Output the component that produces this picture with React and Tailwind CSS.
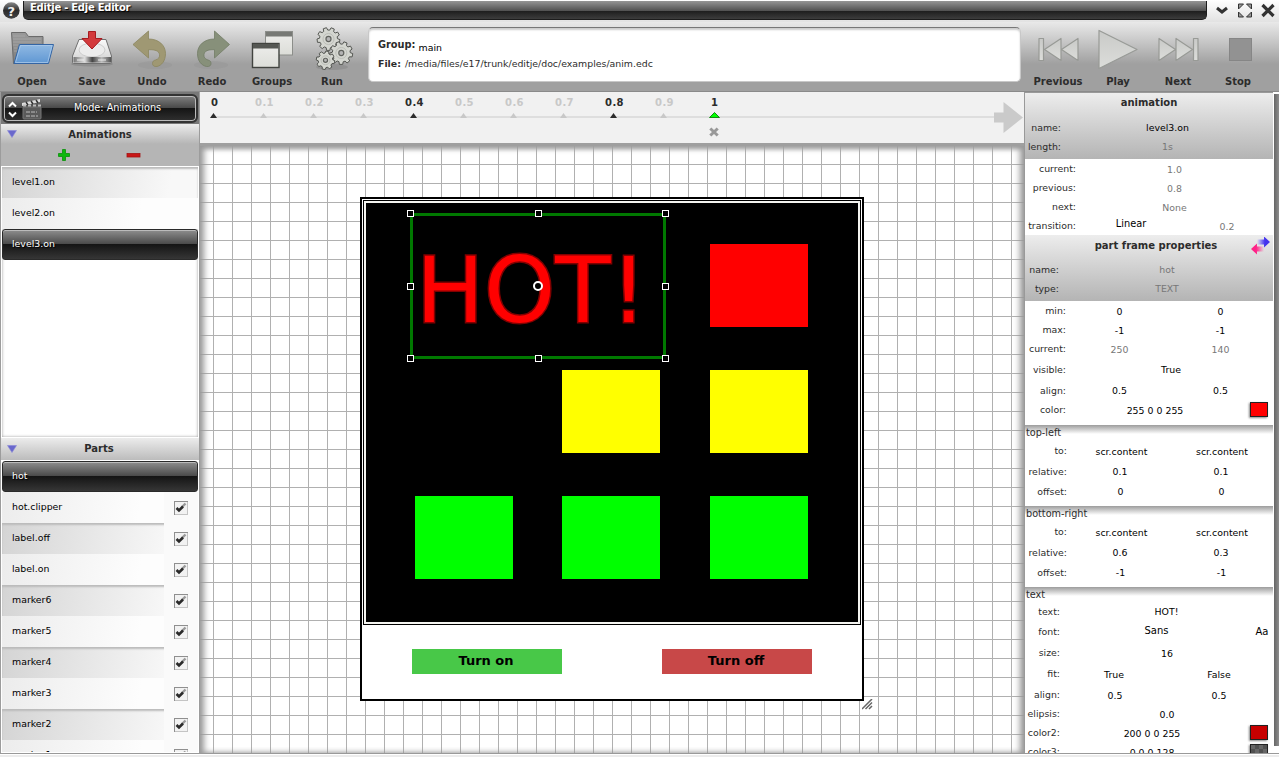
import React from "react";

const gear = (cx, cy, r, teeth) => {
  const pts = [];
  for (let i = 0; i < teeth; i++) {
    const a = (i * 2 * Math.PI) / teeth + 0.2;
    const s = Math.PI / teeth;
    [[-0.68, 0.78], [-0.42, 1], [0.42, 1], [0.68, 0.78]].forEach(([o, k]) => {
      pts.push(`${(cx + Math.cos(a + o * s) * r * k).toFixed(2)},${(cy + Math.sin(a + o * s) * r * k).toFixed(2)}`);
    });
  }
  return pts.join(" ");
};

const OpenIcon = () => (
  <svg width="60" height="50" viewBox="2 24 60 50">
    <defs>
      <linearGradient id="blue" x1="0" y1="0" x2="0" y2="1"><stop offset="0" stopColor="#90b9e3" /><stop offset="1" stopColor="#5f97d3" /></linearGradient>
      <linearGradient id="fold" x1="0" y1="0" x2="0" y2="1"><stop offset="0" stopColor="#9a9a9a" /><stop offset="1" stopColor="#7e7e7e" /></linearGradient>
    </defs>
    <path d="M11.5 32.5h14l3 4h14.500v8l-4 19H13.500z" fill="url(#fold)" stroke="#6b6b6b" />
    <path d="M13 36h12M13 39h28M13 42h28M13 45h5M14 48h3M14 51h3" stroke="#a9a9a9" strokeWidth="0.8" />
    <path d="M19.500 44.500h34l-5 19H14z" fill="url(#blue)" stroke="#3465a4" />
    <path d="M20.500 45.500h31.500l-4.300 17H15.500z" fill="none" stroke="#a9c9ea" strokeWidth="0.8" />
  </svg>
);

const SaveIcon = () => (
  <svg width="60" height="50" viewBox="62 24 60 50">
    <defs>
      <linearGradient id="disk" x1="0" y1="0" x2="0" y2="1"><stop offset="0" stopColor="#fafafa" /><stop offset="1" stopColor="#cfcfcf" /></linearGradient>
      <linearGradient id="front" x1="0" y1="0" x2="1" y2="0"><stop offset="0" stopColor="#777" /><stop offset=".3" stopColor="#ddd" /><stop offset=".5" stopColor="#444" /><stop offset=".75" stopColor="#bbb" /><stop offset="1" stopColor="#555" /></linearGradient>
    </defs>
    <ellipse cx="92" cy="64" rx="21" ry="2.500" fill="#777" opacity=".45" />
    <path d="M79 39.500h27l5.500 16.500v6.500q0 1-1 1h-37q-1 0-1-1V56z" fill="url(#disk)" stroke="#707070" />
    <ellipse cx="92" cy="50" rx="13" ry="7" fill="#ececec" stroke="#c4c4c4" strokeWidth="0.8" />
    <rect x="73.500" y="57" width="37.500" height="5.500" fill="url(#front)" />
    <path d="M77 60h7M98 60h8" stroke="#eee" strokeWidth="1" />
    <path d="M88.500 31.500h7v7h6.500l-10 10.500-10-10.500h6.500z" fill="#d33a3c" stroke="#a61b20" />
  </svg>
);

const UndoIcon = () => (
  <svg width="60" height="50" viewBox="122 24 60 50">
    <ellipse cx="155" cy="65" rx="17" ry="4" fill="#888" opacity=".2" />
    <path d="M133 44.500L148.500 31v8c10 0 17 6 17 14.500 0 7.500-4 12-8.500 13-3 .4-4.500-1-4.500-3 0-2 1-3 3-3.500 3-.8 4.500-3 4-5.500-.6-3.500-4-5-11-4.800V58z" fill="#9f9873" stroke="#8b865f" strokeWidth="0.800" />
  </svg>
);

const RedoIcon = () => (
  <svg width="60" height="50" viewBox="182 24 60 50">
    <ellipse cx="211" cy="65" rx="17" ry="4" fill="#888" opacity=".2" />
    <path d="M229.500 44.500L214.500 31v8c-10 0-17 6-17 14.500 0 7.500 4 12 9 13 3 .4 4.500-1 4.500-3 0-2-1-3-3-3.500-3-.8-4.500-3-4-5.500.6-3.500 3.500-5 10.500-4.800V58z" fill="#87907a" stroke="#727c66" strokeWidth="0.800" />
  </svg>
);

const GroupsIcon = () => (
  <svg width="60" height="50" viewBox="242 24 60 50">
    <defs><linearGradient id="win" x1="0" y1="0" x2="0" y2="1"><stop offset="0" stopColor="#eeeeec" /><stop offset="1" stopColor="#dcddd8" /></linearGradient></defs>
    <rect x="265.500" y="31.500" width="27" height="23.500" fill="url(#win)" stroke="#8c8e8a" />
    <rect x="266" y="32" width="26" height="4.500" fill="#777975" />
    <rect x="252.500" y="43.500" width="26.500" height="24" fill="url(#win)" stroke="#41433f" strokeWidth="1.400" />
    <rect x="253" y="44" width="25.500" height="4.500" fill="#555753" />
  </svg>
);

const RunIcon = () => (
  <svg width="60" height="50" viewBox="302 24 60 50">
    <ellipse cx="332" cy="67" rx="16" ry="3" fill="#777" opacity=".35" />
    {[[328.500, 39, 11.500, 9], [341.300, 53, 11.500, 9], [325.500, 60.300, 9.300, 8]].map(([x, y, r, n]) => (
      <g key={x}>
        <polygon points={gear(x, y, r, n)} fill="#d4d6d0" stroke="#555753" strokeWidth="1" strokeLinejoin="round" />
        <circle cx={x} cy={y} r={r * 0.48} fill="none" stroke="#bcbeb8" strokeWidth="1" />
        <circle cx={x} cy={y} r={r * 0.22} fill="#b4b4b4" stroke="#60625e" strokeWidth="1.200" />
      </g>
    ))}
  </svg>
);

const MediaDefs = () => (
  <defs><linearGradient id="media" x1="0" y1="0" x2="0" y2="1"><stop offset="0" stopColor="#c9cac8" /><stop offset="1" stopColor="#dcddda" /></linearGradient></defs>
);

const PrevIcon = () => (
  <svg width="60" height="50" viewBox="1028 24 60 50">
    <MediaDefs />
    <g fill="url(#media)" stroke="#989a96" strokeWidth="1.200" strokeLinejoin="round">
      <path d="M1039 38.500h4.500v22h-4.500z" /><path d="M1061 38.500v22L1044.500 49.500zM1078 38.500v22L1061.500 49.500z" />
    </g>
  </svg>
);
const PlayIcon = () => (
  <svg width="60" height="50" viewBox="1088 24 60 50">
    <path d="M1099 30.500v38l38-19z" fill="url(#media)" stroke="#989a96" strokeWidth="1.200" strokeLinejoin="round" />
  </svg>
);
const NextIcon = () => (
  <svg width="60" height="50" viewBox="1148 24 60 50">
    <g fill="url(#media)" stroke="#989a96" strokeWidth="1.200" strokeLinejoin="round">
      <path d="M1193.500 38.500h4.500v22h-4.500z" /><path d="M1159 38.500v22L1175.500 49.500zM1176 38.500v22L1192.500 49.500z" />
    </g>
  </svg>
);
const StopIcon = () => (
  <svg width="60" height="50" viewBox="1208 24 60 50">
    <rect x="1229.500" y="38.500" width="22" height="22" fill="#929292" stroke="#868686" />
  </svg>
);

const Tool = ({ icon, label }) => (
  <div className="flex w-[60px] flex-col items-center">
    {icon}
    <span className="text-[10px] leading-[15px] font-bold text-[#2c2c2c]">{label}</span>
  </div>
);

const TitleBar = () => (
  <div className="flex h-[22px] bg-gradient-to-b from-white to-[#e2e2e2]">
    <svg width="23" height="22" viewBox="0 0 23 22">
      <defs><linearGradient id="orb" x1="0" y1="0" x2="0" y2="1"><stop offset="0" stopColor="#8a8a8a" /><stop offset=".5" stopColor="#2c2c2c" /><stop offset="1" stopColor="#454545" /></linearGradient></defs>
      <circle cx="11.300" cy="10.500" r="8.300" fill="url(#orb)" />
      <text x="11.300" y="15.500" textAnchor="middle" fontFamily="DejaVu Sans" fontWeight="bold" fontSize="13" fill="#eee">?</text>
    </svg>
    <div className="mt-px h-[19px] w-[1184px] rounded-b-[5px] border-x border-b border-[#1c1c1c] bg-[linear-gradient(#959595_0,#505050_10px,#1e1e1e_10px,#404040_19px)] pl-[6px] text-[10px] leading-[13px] font-bold tracking-[-0.25px] text-white [text-shadow:1px_1px_1px_#000]">
      Editje - Edje Editor
    </div>
    <svg width="72" height="22" viewBox="1207 0 72 22">
      <g stroke="#333" fill="none">
        <path d="M1217 8l5 4 5-4" strokeWidth="3" />
        <path d="M1262.500 5l11 11M1273.500 5l-11 11" strokeWidth="3.200" />
      </g>
      <path d="M1238.500 4h5l-5 5zM1251.500 4h-5l5 5zM1238.500 17h5l-5-5zM1251.500 17h-5l5-5z" fill="#999" stroke="#333" />
    </svg>
  </div>
);

const Toolbar = () => (
  <div className="flex h-[70px] border-b border-[#8a8a8a] bg-[linear-gradient(#e9e9e9_0,#a0a0a0_42px,#a0a0a0_100%)] pt-[2px]">
    <div className="flex w-[366px] pl-[2px]">
      <Tool icon={<OpenIcon />} label="Open" />
      <Tool icon={<SaveIcon />} label="Save" />
      <Tool icon={<UndoIcon />} label="Undo" />
      <Tool icon={<RedoIcon />} label="Redo" />
      <Tool icon={<GroupsIcon />} label="Groups" />
      <Tool icon={<RunIcon />} label="Run" />
    </div>
    <div className="mt-[3px] ml-[2px] flex h-[55px] w-[653px] flex-col rounded-[5px] border border-[#c8c8c8] border-t-[#777] bg-white pt-[9px] pl-[9px] text-[9.4px] shadow-[inset_0_2px_2px_#ccc]">
      <div className="flex h-[19px] gap-[3px] leading-[16px]">
        <b className="text-[9.8px] text-[#2c2c2c]">Group:</b>
        <span className="pt-[3px] text-black">main</span>
      </div>
      <div className="flex gap-[4px] leading-[16px] text-[#2c2c2c]">
        <b>File:</b>
        <span>/media/files/e17/trunk/editje/doc/examples/anim.edc</span>
      </div>
    </div>
    <div className="ml-[7px] flex">
      <Tool icon={<PrevIcon />} label="Previous" />
      <Tool icon={<PlayIcon />} label="Play" />
      <Tool icon={<NextIcon />} label="Next" />
      <Tool icon={<StopIcon />} label="Stop" />
    </div>
  </div>
);

const Collapse = () => (
  <svg className="ml-[6px] shrink-0" width="10" height="8" viewBox="0 0 10 8"><path d="M.5 .5h9L5 7.500z" fill="#6a68cc" stroke="#8a88da" strokeWidth=".6" /></svg>
);

const Check = () => (
  <svg width="14" height="14" viewBox="0 0 14 14">
    <rect x=".5" y=".5" width="13" height="13" fill="#f2f2f2" stroke="#c4c4c4" />
    <path d="M0 .5h14M.5 0v14" stroke="#8f8f8f" />
    <path d="M8 6l3.500-3.500" stroke="#999" strokeWidth="2.400" />
    <path d="M2.500 7L5 9.500l4-4" stroke="#2a2a2a" strokeWidth="2.600" fill="none" />
  </svg>
);

const selectedRow = "h-[31px] shrink-0 rounded-[3px] border border-[#2a2a2a] bg-[linear-gradient(#8e8e8e_0,#4a4a4a_14px,#141414_14px,#383838_30px)] pl-[9px] text-[9.4px] leading-[27px] text-white shadow-[inset_0_1px_0_#bbb] [text-shadow:1px_1px_1px_#000]";
const lightRow = "flex h-[31px] shrink-0 bg-[linear-gradient(100deg,#ececec_0,#fdfdfd_70%)] pl-[10px] text-[9.4px] leading-[29px] text-black";
const darkRow = "flex h-[31px] shrink-0 bg-[linear-gradient(100deg,#d4d4d4_0,#f8f8f8_85%)] pl-[10px] text-[9.4px] leading-[29px] text-black shadow-[inset_0_2px_2px_#bbb]";

const PartRow = ({ name, dark }) => (
  <div className={dark ? darkRow : lightRow}>
    <span className="w-[152px]">{name}</span>
    <div className="flex h-[31px] w-[34px] bg-[#fafafa] pt-[9px] pl-[10px]"><Check /></div>
  </div>
);

const LeftPanel = () => (
  <div className="flex w-[200px] flex-col border-r border-l border-[#9c9c9c]">
    <div className="h-[32px] bg-[#787878] px-px pt-[2px]">
      <div className="flex h-[29px] items-center rounded-[6px] border-2 border-[#333] bg-[linear-gradient(#808080_0,#484848_12px,#141414_12px,#303030_25px)] shadow-[inset_0_0_0_1px_#bbb]">
        <svg width="38" height="22" viewBox="4 97 38 22">
          <path d="M9 105.500l3.500-3.500 3.500 3.500M9 111.500l3.500 3.500 3.500-3.500" fill="none" stroke="#fff" strokeWidth="2" />
          <rect x="23" y="106" width="18" height="12" rx="1" fill="#5a5a5a" stroke="#777" />
          <path d="M22 102l18-4v3l-18 4z" fill="#ddd" /><path d="M23 104.500h18" stroke="#bbb" strokeWidth="2" strokeDasharray="3 2" />
          <path d="M26 101l2 3M31 100l2 3M36 99l2 3" stroke="#333" strokeWidth="1.500" />
          <path d="M26 111h4M31 111h6M26 115h12" stroke="#bbb" strokeDasharray="4 1" />
        </svg>
        <span className="grow pr-[3px] text-center text-[9.7px] text-white [text-shadow:0_0_2px_#000]">Mode: Animations</span>
      </div>
    </div>
    <div className="h-[42px] bg-[linear-gradient(#ececec_0,#b5b5b5_20px)]">
      <div className="flex h-[20px] items-center">
        <Collapse />
        <span className="grow pr-[16px] text-center text-[10px] leading-[15px] font-bold text-[#2c2c2c]">Animations</span>
      </div>
      <div className="flex h-[22px] items-start gap-[54px] pt-[4px] pl-[55px]">
        <svg width="16" height="15" viewBox="0 0 16 15"><path d="M6.500 1.500h3v4h4v3h-4v4h-3v-4h-4v-3h4z" fill="#0cb80c" stroke="#079007" strokeWidth=".8" /></svg>
        <svg width="16" height="15" viewBox="0 0 16 15"><rect x="1" y="5.500" width="13" height="3.500" fill="#c81616" stroke="#a51212" strokeWidth=".8" /></svg>
      </div>
    </div>
    <div className="flex h-[272px] shrink-0 flex-col border border-white bg-white shadow-[inset_0_0_3px_#999]">
      <div className={darkRow}>level1.on</div>
      <div className={lightRow}>level2.on</div>
      <div className={selectedRow}>level3.on</div>
    </div>
    <div className="flex h-[22px] shrink-0 items-center bg-gradient-to-b from-[#ececec] to-[#bcbcbc]">
      <Collapse />
      <span className="grow pr-[18px] pb-px text-center text-[10px] font-bold text-[#2c2c2c]">Parts</span>
    </div>
    <div className="flex h-[293px] shrink-0 flex-col overflow-hidden border border-white bg-white">
      <div className={selectedRow}>hot</div>
      <PartRow name="hot.clipper" />
      <PartRow name="label.off" dark />
      <PartRow name="label.on" />
      <PartRow name="marker6" dark />
      <PartRow name="marker5" />
      <PartRow name="marker4" dark />
      <PartRow name="marker3" />
      <PartRow name="marker2" dark />
      <PartRow name="marker1" />
    </div>
  </div>
);

const ticks = ["0", "0.1", "0.2", "0.3", "0.4", "0.5", "0.6", "0.7", "0.8", "0.9", "1"];
const keyframes = ["0", "0.4", "0.8"];

const Timeline = () => (
  <div className="flex h-[54px] border-b-[3px] border-[#9f9f9f] bg-[#f1f1f1]">
    <div className="flex w-[794px] pt-[3px]">
      {ticks.map((t, i) => {
        const key = keyframes.includes(t);
        const last = t === "1";
        return (
          <div key={t} className={i === 0 ? "flex w-[39px] shrink-0 flex-col" : last ? "flex w-[305px] shrink-0 flex-col" : "flex w-[50px] shrink-0 flex-col"}>
            <span className={(i === 0 ? "pl-[11px]" : last ? "pl-[22px]" : "w-[50px] pl-[1px] text-center") + " text-[10px] leading-[16px] font-bold tracking-[0.4px] " + (key || last ? "text-[#2c2c2c]" : "text-[#c8c8c8]")}>{t}</span>
            <svg className="shrink-0" width={i === 0 ? 39 : last ? 305 : 50} height="30" viewBox={i === 0 ? "-14 0 39 30" : last ? "-25.5 0 305 30" : "-25 0 50 30"}>
              <rect x={i === 0 ? 0 : -26} y="5" width={last ? 310 : 52} height="2" fill="#dedede" />
              {last ? (
                <>
                  <path d="M-5 6.500L0 1.500L5 6.500z" fill="#0f0" stroke="#128a12" />
                  <path d="M-4.200 17.500L3.200 24.500M3.200 17.500L-4.200 24.500" stroke="#999" strokeWidth="3" />
                </>
              ) : (
                <path d="M-4 7L-.5 2L3 7z" fill={key ? "#2c2c2c" : "#c8c8c8"} />
              )}
            </svg>
          </div>
        );
      })}
    </div>
    <svg width="30" height="51" viewBox="994 92 30 51"><path d="M994 112.500h9.500V102L1023 117.500L1003.500 133V122.500H994z" fill="#cacaca" /></svg>
  </div>
);

const handle = "absolute h-[7px] w-[7px] border border-white bg-black";

const Canvas = () => (
  <div className="relative h-[608px] overflow-hidden bg-white bg-[linear-gradient(#b0b0b0_1px,transparent_1px),linear-gradient(90deg,#b0b0b0_1px,transparent_1px)] bg-[size:19px_19px] bg-[position:13px_18px]">
    <div className="absolute inset-0 border-b border-[#999] shadow-[inset_5px_0_6px_-1px_#999,inset_-5px_0_6px_-1px_#999,inset_0_4px_5px_-1px_#aaa]" />
    <div className="absolute top-[51px] left-[160px] h-[504px] w-[504px] border-2 border-black bg-white">
      <div className="mt-px ml-px h-[425px] w-[498px] border border-black bg-[#f4f4f0] p-[2px]"><div className="h-full w-full bg-black" /></div>
      <div className="flex justify-between px-[50px] pt-[24px] text-[13px] leading-[23px] font-bold text-black">
        <div className="h-[25px] w-[150px] bg-[#48c848] pr-[2px] text-center">Turn on</div>
        <div className="h-[25px] w-[150px] bg-[#c84848] pr-[2px] text-center">Turn off</div>
      </div>
    </div>
    <div className="absolute top-[98px] left-[510px] h-[83px] w-[98px] bg-[#f00]" />
    <div className="absolute top-[224px] left-[362px] h-[83px] w-[98px] bg-[#ff0]" />
    <div className="absolute top-[224px] left-[510px] h-[83px] w-[98px] bg-[#ff0]" />
    <div className="absolute top-[350px] left-[215px] h-[83px] w-[98px] bg-[#0f0]" />
    <div className="absolute top-[350px] left-[362px] h-[83px] w-[98px] bg-[#0f0]" />
    <div className="absolute top-[350px] left-[510px] h-[83px] w-[98px] bg-[#0f0]" />
    <div className="absolute top-[67px] left-[210px] h-[146px] w-[256px] border-[3px] border-[#007800]" />
    <div className="absolute top-[91px] left-[216px] text-[90.500px] leading-[107px] text-[#f00] [-webkit-text-stroke:3px_#800000] [paint-order:stroke_fill]">HOT!</div>
    <div className={handle + " top-[64px] left-[207px]"} />
    <div className={handle + " top-[64px] left-[335px]"} />
    <div className={handle + " top-[64px] left-[462px]"} />
    <div className={handle + " top-[137px] left-[207px]"} />
    <div className={handle + " top-[137px] left-[462px]"} />
    <div className={handle + " top-[209px] left-[207px]"} />
    <div className={handle + " top-[209px] left-[335px]"} />
    <div className={handle + " top-[209px] left-[462px]"} />
    <div className="absolute top-[135px] left-[333px] h-[10px] w-[10px] rounded-full border-2 border-white bg-black" />
    <svg className="absolute top-[553px] left-[662px]" width="11" height="11" viewBox="0 0 11 11"><path d="M0 10L10 0M3.500 10L10 3.500M7 10L10 7" stroke="#666" strokeWidth="1.500" /></svg>
  </div>
);

const Swatch = ({ color }) => <div className={"h-[15px] w-[18px] shrink-0 border border-[#222] shadow-[-1px_1px_2px_#888] " + color} />;

const Row = ({ h = "h-[19px]", label, lw, cells, dim, swatch }) => (
  <div className={"flex shrink-0 items-center " + h}>
    <span className={"shrink-0 pt-px text-right whitespace-nowrap text-[#2c2c2c] " + lw}>{label}</span>
    {cells.map(([w, text], i) => (
      <span key={i} className={"shrink-0 pt-[2px] text-center whitespace-nowrap " + w + (dim ? " text-[#777]" : " text-black")}>{text}</span>
    ))}
    {swatch && <Swatch color={swatch} />}
  </div>
);

const Head = ({ title, icon, children }) => (
  <div className="flex h-[66px] shrink-0 flex-col bg-gradient-to-b from-[#ededed] to-[#b4b4b4]">
    <div className="flex h-[24px] items-start pt-[3px]">
      <span className={"text-center text-[10px] font-bold leading-[15px] text-[#2c2c2c] " + (icon ? "w-[225px] pl-[37px]" : "mt-[-1px] w-[248px]")}>{title}</span>
      {icon}
    </div>
    {children}
  </div>
);

const Section = ({ title, children, h }) => (
  <div className={"flex shrink-0 flex-col bg-[linear-gradient(#9c9c9c_0,#fff_9px)] " + h}>
    <div className="h-[16px] shrink-0 pl-px text-[9.7px] leading-[16px] text-[#2c2c2c]">{title}</div>
    {children}
  </div>
);

const SwapIcon = () => (
  <svg className="mt-[-1px] ml-[1px]" width="20" height="18" viewBox="1251 237 20 18">
    <defs>
      <linearGradient id="sb" x1="0" x2="1"><stop offset="0" stopColor="#43f" stopOpacity="0" /><stop offset=".6" stopColor="#43e" /></linearGradient>
      <linearGradient id="sr" x1="0" x2="1"><stop offset=".4" stopColor="#f28" /><stop offset="1" stopColor="#f28" stopOpacity="0" /></linearGradient>
    </defs>
    <path d="M1257 239.500h7v-3l6 5.500-6 5.500v-3h-7z" fill="url(#sb)" />
    <path d="M1264 251.500h-7v3l-6-5.500 6-5.500v3h7z" fill="url(#sr)" />
  </svg>
);

const RightPanel = () => (
  <div className="flex h-[662px] w-[255px] border-l border-[#999] bg-white text-[9.4px] leading-[14px]">
    <div className="flex h-[662px] w-[248px] shrink-0 flex-col overflow-hidden">
      <div className="h-px shrink-0 bg-[#999]" />
      <Head title="animation">
        <Row label="name:" lw="w-[36px]" cells={[["w-[213px]", "level3.on"]]} h="h-[20px]" />
        <Row label="length:" lw="w-[36px]" cells={[["w-[213px]", "1s"]]} dim h="h-[18px]" />
      </Head>
      <div className="h-[76px] shrink-0">
        <Row label="current:" lw="w-[51px]" cells={[["w-[197px]", "1.0"]]} dim />
        <Row label="previous:" lw="w-[51px]" cells={[["w-[197px]", "0.8"]]} dim />
        <Row label="next:" lw="w-[51px]" cells={[["w-[197px]", "None"]]} dim />
        <div className="flex h-[19px] items-center">
          <span className="w-[51px] pt-px text-right text-[#2c2c2c]">transition:</span>
          <span className="w-[110px] pb-[3px] text-center text-[9.8px] text-black">Linear</span>
          <span className="w-[82px] pt-[2px] text-center text-[#777]">0.2</span>
        </div>
      </div>
      <Head title="part frame properties" icon={<SwapIcon />}>
        <Row label="name:" lw="w-[34px]" cells={[["w-[216px]", "hot"]]} dim h="h-[20px]" />
        <Row label="type:" lw="w-[34px]" cells={[["w-[216px]", "TEXT"]]} dim h="h-[18px]" />
      </Head>
      <div className="h-[124px] shrink-0">
        <Row label="min:" lw="w-[41px]" cells={[["w-[107px]", "0"], ["w-[95px]", "0"]]} />
        <Row label="max:" lw="w-[41px]" cells={[["w-[107px]", "-1"], ["w-[95px]", "-1"]]} />
        <Row label="current:" lw="w-[41px]" cells={[["w-[107px]", "250"], ["w-[95px]", "140"]]} dim />
        <Row label="visible:" lw="w-[41px]" cells={[["w-[210px]", "True"]]} h="h-[22px]" />
        <Row label="align:" lw="w-[41px]" cells={[["w-[107px]", "0.5"], ["w-[95px]", "0.5"]]} h="h-[20px]" />
        <Row label="color:" lw="w-[41px]" cells={[["w-[178px] mr-[6px]", "255 0 0 255"]]} swatch="bg-[#f00]" />
      </div>
      <Section title="top-left" h="h-[81px]">
        <Row label="to:" lw="w-[42px]" cells={[["w-[109px]", "scr.content"], ["w-[92px]", "scr.content"]]} h="h-[19px]" />
        <Row label="relative:" lw="w-[42px]" cells={[["w-[106px]", "0.1"], ["w-[96px]", "0.1"]]} h="h-[22px]" />
        <Row label="offset:" lw="w-[42px]" cells={[["w-[107px]", "0"], ["w-[95px]", "0"]]} h="h-[18px]" />
      </Section>
      <Section title="bottom-right" h="h-[81px]">
        <Row label="to:" lw="w-[42px]" cells={[["w-[109px]", "scr.content"], ["w-[92px]", "scr.content"]]} h="h-[19px]" />
        <Row label="relative:" lw="w-[42px]" cells={[["w-[106px]", "0.6"], ["w-[96px]", "0.3"]]} h="h-[22px]" />
        <Row label="offset:" lw="w-[42px]" cells={[["w-[107px]", "-1"], ["w-[95px]", "-1"]]} h="h-[18px]" />
      </Section>
      <Section title="text" h="h-[180px]">
        <Row label="text:" lw="w-[35px]" cells={[["w-[213px]", "HOT!"]]} h="h-[16px]" />
        <div className="flex h-[24px] shrink-0 items-center">
          <span className="w-[35px] pt-px text-right text-[#2c2c2c]">font:</span>
          <span className="w-[193px] text-center text-[10px] text-black">Sans</span>
          <span className="w-[18px] pt-[2px] text-center text-[10px] text-black">Aa</span>
        </div>
        <Row label="size:" lw="w-[35px]" cells={[["w-[214px]", "16"]]} h="h-[19px]" />
        <Row label="fit:" lw="w-[35px]" cells={[["w-[108px]", "True"], ["w-[102px]", "False"]]} h="h-[23px]" />
        <Row label="align:" lw="w-[35px]" cells={[["w-[110px]", "0.5"], ["w-[98px]", "0.5"]]} />
        <Row label="elipsis:" lw="w-[35px]" cells={[["w-[214px]", "0.0"]]} />
        <Row label="color2:" lw="w-[35px]" cells={[["w-[184px] mr-[6px]", "200 0 0 255"]]} swatch="bg-[#c80000]" />
        <Row label="color3:" lw="w-[35px]" cells={[["w-[184px] mr-[6px]", "0 0 0 128"]]} swatch="bg-[repeating-conic-gradient(#505050_0_25%,#666_0_50%)] bg-[size:8px_8px]" />
      </Section>
    </div>
    <div className="mt-[2px] ml-[1px] h-[652px] w-[5px] bg-gradient-to-r from-[#666] to-[#8e8e8e]" />
  </div>
);

export default function App() {
  return (
    <div className="flex h-[757px] w-[1279px] flex-col overflow-hidden bg-white font-['DejaVu_Sans',sans-serif]">
      <TitleBar />
      <Toolbar />
      <div className="flex h-[662px] shrink-0 overflow-hidden border-b border-[#999]">
        <LeftPanel />
        <div className="w-[824px]">
          <Timeline />
          <Canvas />
        </div>
        <RightPanel />
      </div>
      <div className="mt-px h-[2px] bg-[#ececec]" />
    </div>
  );
}
